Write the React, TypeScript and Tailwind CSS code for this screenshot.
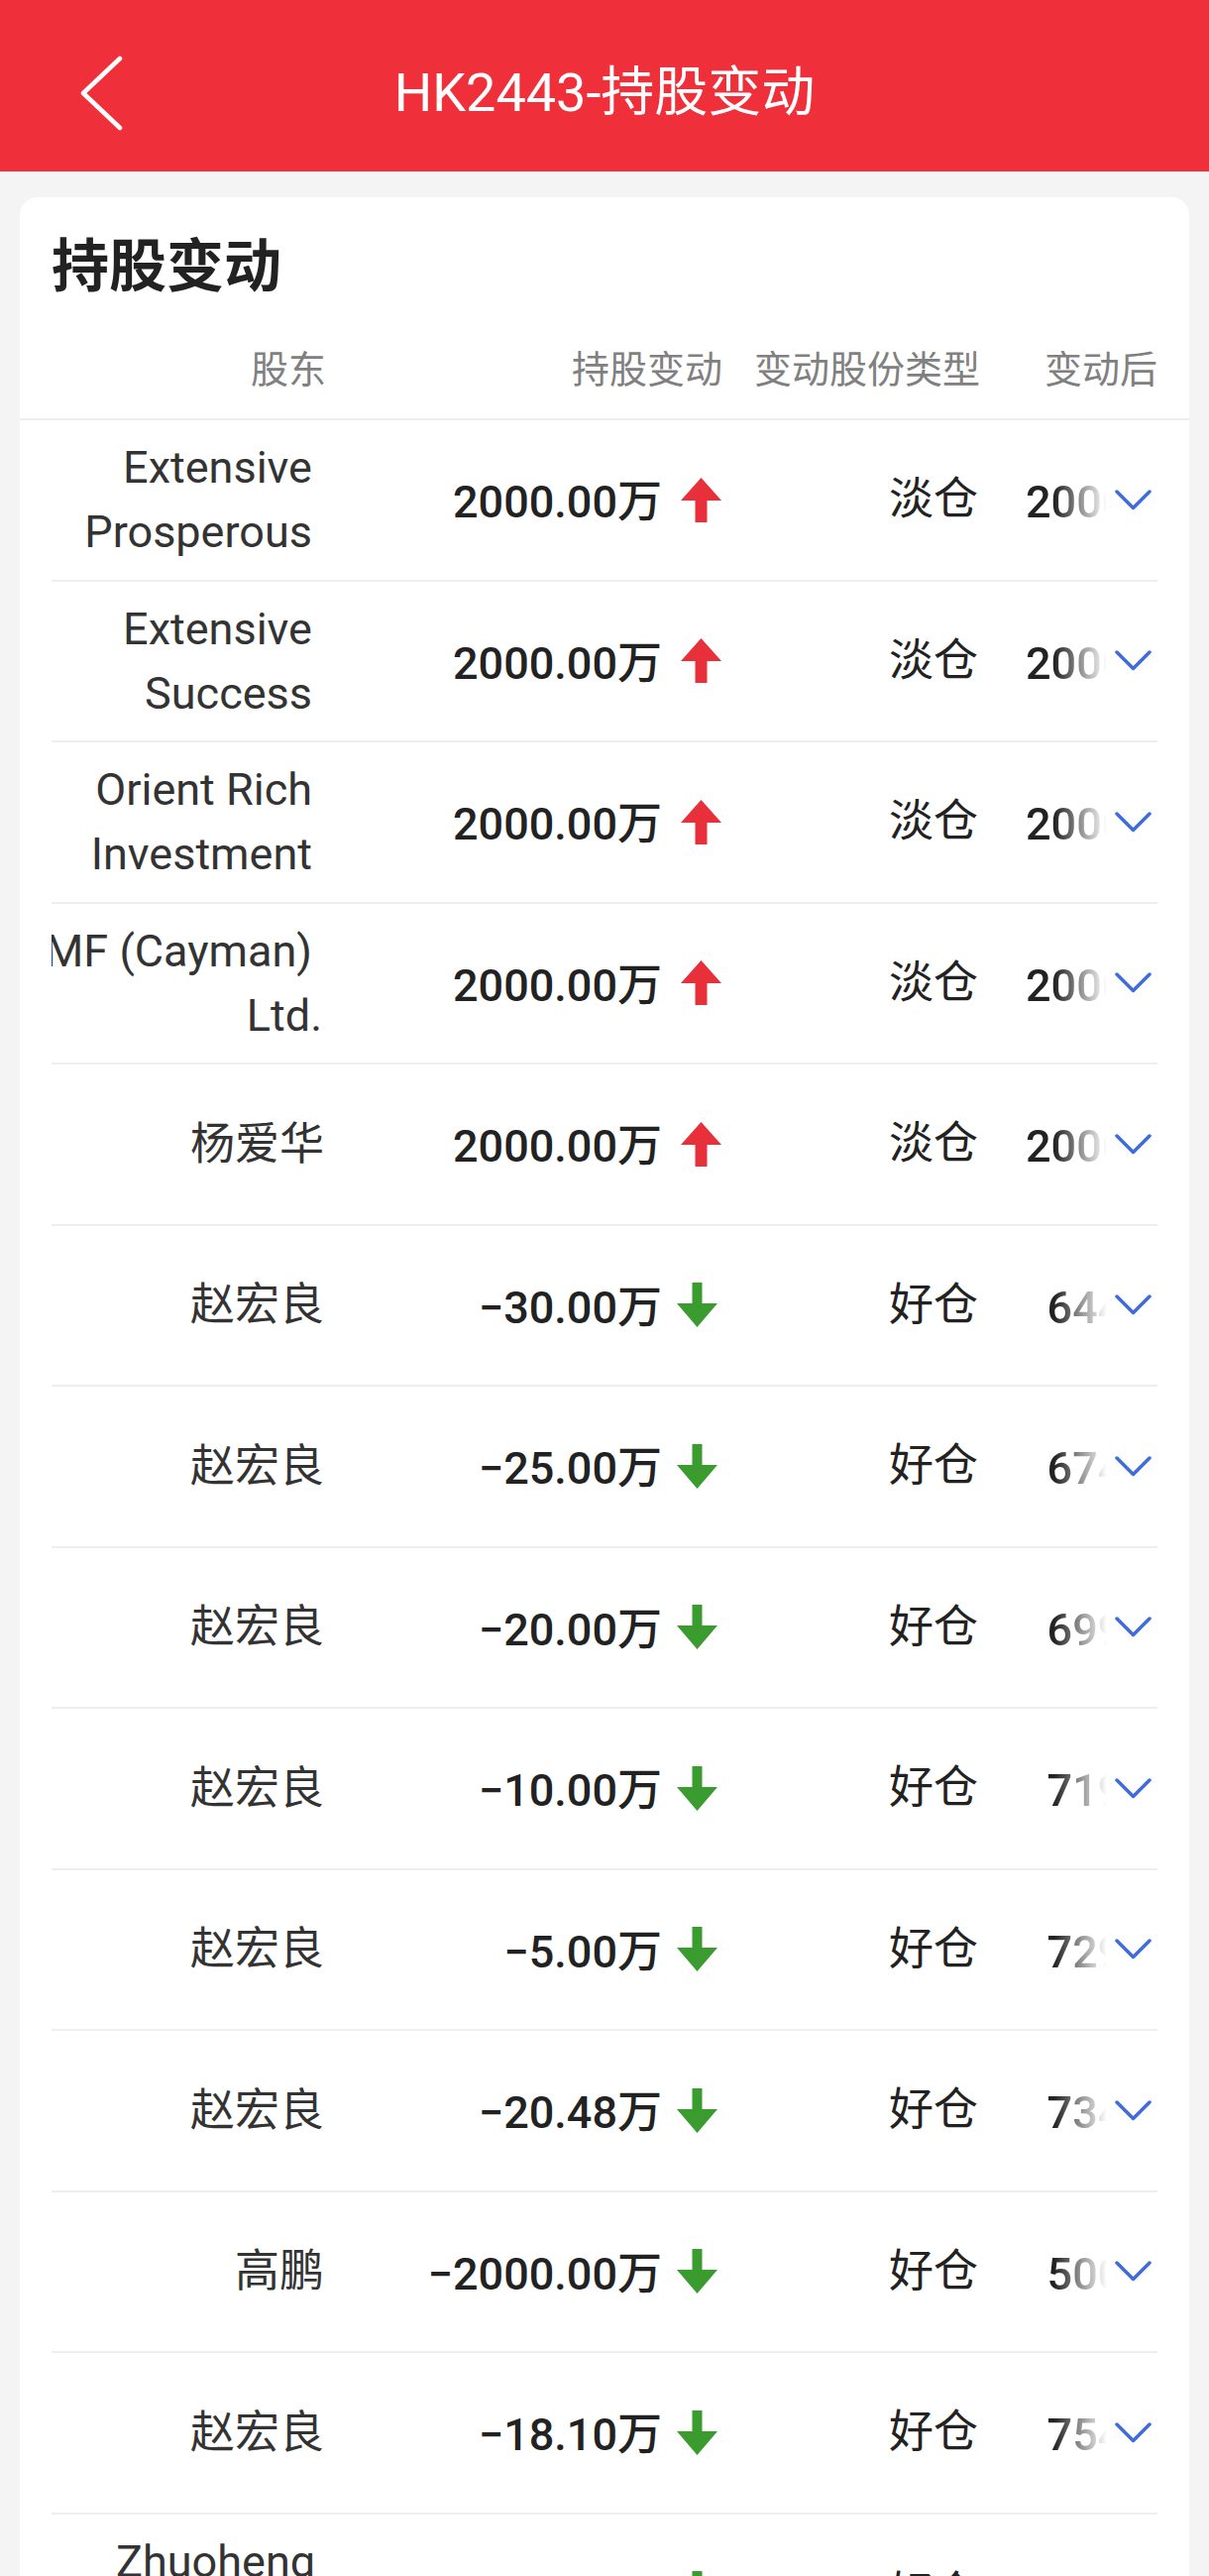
import React from "react";

type Line = { t: string; pr: string };
type Row = {
  name: Line[];
  change: string;
  up: boolean;
  type: string;
  after: string;
};

const en = "pr-[13px]";
const cjk = "pr-[1px]";

const rows: Row[] = [
  { name: [{ t: "Extensive", pr: en }, { t: "Prosperous", pr: en }], change: "2000.00万", up: true, type: "淡仓", after: "2000.00万" },
  { name: [{ t: "Extensive", pr: en }, { t: "Success", pr: en }], change: "2000.00万", up: true, type: "淡仓", after: "2000.00万" },
  { name: [{ t: "Orient Rich", pr: en }, { t: "Investment", pr: en }], change: "2000.00万", up: true, type: "淡仓", after: "2000.00万" },
  { name: [{ t: "CMF (Cayman)", pr: en }, { t: "Ltd.", pr: "pr-[3px]" }], change: "2000.00万", up: true, type: "淡仓", after: "2000.00万" },
  { name: [{ t: "杨爱华", pr: cjk }], change: "2000.00万", up: true, type: "淡仓", after: "2000.00万" },
  { name: [{ t: "赵宏良", pr: cjk }], change: "−30.00万", up: false, type: "好仓", after: "644.30万" },
  { name: [{ t: "赵宏良", pr: cjk }], change: "−25.00万", up: false, type: "好仓", after: "674.30万" },
  { name: [{ t: "赵宏良", pr: cjk }], change: "−20.00万", up: false, type: "好仓", after: "699.30万" },
  { name: [{ t: "赵宏良", pr: cjk }], change: "−10.00万", up: false, type: "好仓", after: "719.30万" },
  { name: [{ t: "赵宏良", pr: cjk }], change: "−5.00万", up: false, type: "好仓", after: "729.30万" },
  { name: [{ t: "赵宏良", pr: cjk }], change: "−20.48万", up: false, type: "好仓", after: "734.30万" },
  { name: [{ t: "高鹏", pr: cjk }], change: "−2000.00万", up: false, type: "好仓", after: "500.00万" },
  { name: [{ t: "赵宏良", pr: cjk }], change: "−18.10万", up: false, type: "好仓", after: "754.78万" },
  { name: [{ t: "Zhuoheng", pr: "pr-[10px]" }, { t: "Holdings", pr: en }], change: "−500.00万", up: false, type: "好仓", after: "1500.00万" },
];

function UpArrow() {
  return (
    <svg width="41" height="45" viewBox="0 0 41 45" className="ml-[19px] shrink-0">
      <polygon points="20.5,0 41,23 26.5,23 26.5,45 14.5,45 14.5,23 0,23" fill="#e8303a" />
    </svg>
  );
}

function DownArrow() {
  return (
    <svg width="41" height="45" viewBox="0 0 41 45" className="ml-[15px] mr-[4px] shrink-0">
      <polygon points="15.5,0 25.5,0 25.5,21 41,21 20.5,45 0,21 15.5,21" fill="#3a9b2f" />
    </svg>
  );
}

function Chevron() {
  return (
    <svg width="37" height="21" viewBox="0 0 37 21" className="ml-[8px] shrink-0">
      <polyline points="2,2 18.5,18.5 35,2" fill="none" stroke="#3f6bdc" strokeWidth="3.5" strokeLinecap="round" strokeLinejoin="round" />
    </svg>
  );
}

export default function App() {
  return (
    <div className="min-h-screen bg-[#f4f4f4] font-[Roboto,'Noto_Sans_CJK_SC',sans-serif]">
      {/* Nav bar */}
      <div className="h-[173px] bg-[#ef2f3a] grid grid-cols-[1fr_auto_1fr] items-center pt-[14px]">
        <div className="pl-[80px] flex items-center">
          <svg width="46" height="76" viewBox="0 0 46 76">
            <polyline points="41,3 4,38 41,73" fill="none" stroke="#ffffff" strokeWidth="4.5" strokeLinecap="round" strokeLinejoin="round" />
          </svg>
        </div>
        <div className="text-white text-[54px] leading-[64px] whitespace-nowrap">HK2443-持股变动</div>
        <div />
      </div>

      {/* Card */}
      <div className="mx-[20px] mt-[26px] bg-white rounded-[18px] overflow-hidden">
        <div className="pl-[32px] pt-[36px] text-[58px] leading-[68px] font-bold text-[#222222]">持股变动</div>

        <div className="border-b-2 border-[#eeeeee]">
          <div className="mx-[32px] flex pt-[45px] pb-[24px] text-[38px] leading-[50px] text-[#808080]">
            <div className="w-[277px] text-right">股东</div>
            <div className="w-[400px] text-right">持股变动</div>
            <div className="w-[260px] text-right">变动股份类型</div>
            <div className="flex-1 text-right">变动后</div>
          </div>
        </div>

        {rows.map((r, i) => (
          <div key={i} className="mx-[32px] h-[162.5px] border-b-2 border-[#eeeeee] flex items-stretch">
            <div className="w-[276px] flex flex-col items-end justify-center overflow-hidden text-[45px] leading-[65px] text-[#333333]">
              {r.name.map((l, j) => (
                <div key={j} className={`whitespace-nowrap ${l.pr}`}>
                  {l.t}
                </div>
              ))}
            </div>
            <div className="w-[401px] flex justify-end items-center pr-[1px]">
              <span className="text-[45px] leading-[56px] font-medium text-[#222222] whitespace-nowrap pt-[6px]">{r.change}</span>
              {r.up ? <UpArrow /> : <DownArrow />}
            </div>
            <div className="w-[260px] flex justify-end items-center pr-[2px] text-[45px] leading-[56px] text-[#222222]">
              {r.type}
            </div>
            <div className="flex-1 flex items-center pl-[46px]">
              <div className="w-[82px] overflow-hidden [mask-image:linear-gradient(to_right,black_35%,transparent_100%)]">
                <div className="w-[207px] text-right text-[45px] leading-[56px] font-medium text-[#222222] whitespace-nowrap pt-[6px]">
                  {r.after}
                </div>
              </div>
              <Chevron />
            </div>
          </div>
        ))}
      </div>
    </div>
  );
}
